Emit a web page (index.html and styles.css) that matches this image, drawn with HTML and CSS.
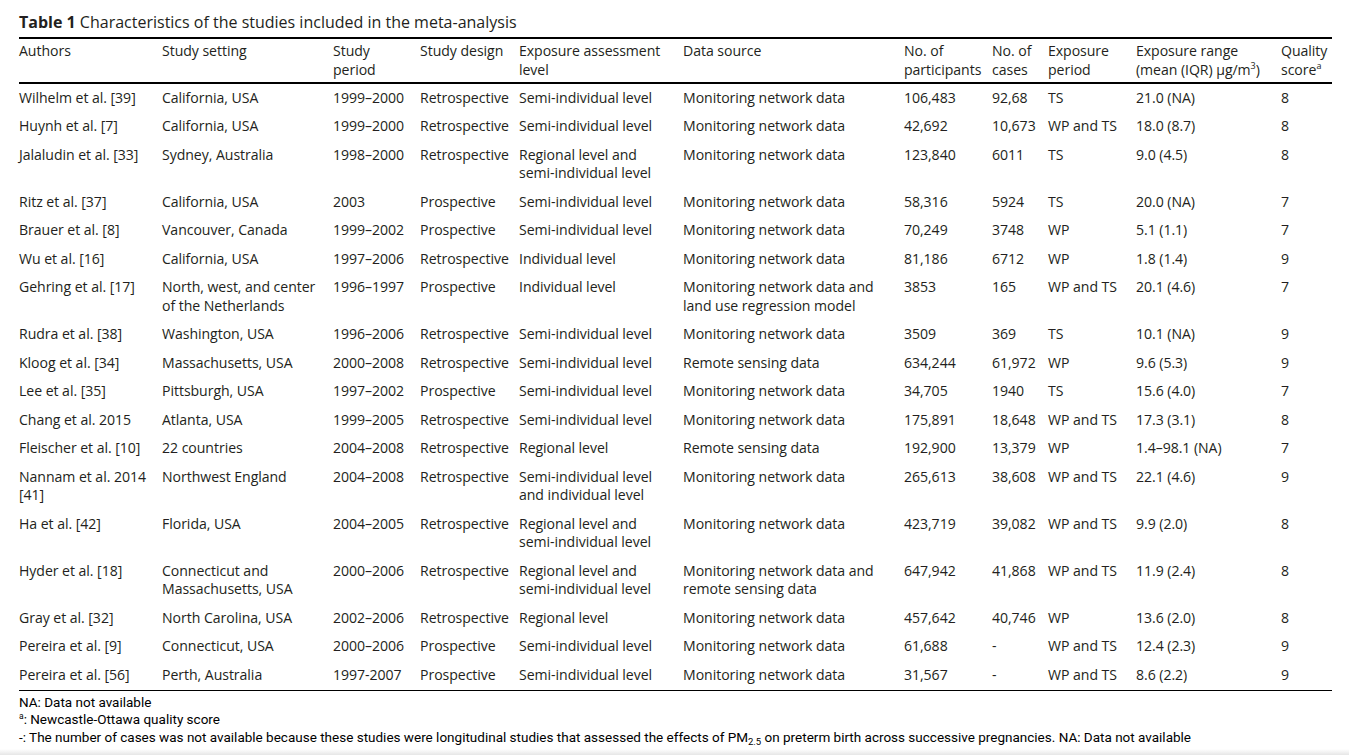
FILE: index.html
```html
<!DOCTYPE html>
<html lang="en">
<head>
<meta charset="utf-8">
<title>Table 1</title>
<link rel="stylesheet" href="styles.css">
</head>
<body>
<div class="page">
  <h1 class="caption"><b>Table 1</b> Characteristics of the studies included in the meta-analysis</h1>
  <table class="tbl">
    <colgroup>
      <col class="c1"><col class="c2"><col class="c3"><col class="c4"><col class="c5"><col class="c6"><col class="c7"><col class="c8"><col class="c9"><col class="c10"><col class="c11">
    </colgroup>
    <thead>
      <tr>
        <th>Authors</th><th>Study setting</th><th>Study<br>period</th><th>Study design</th><th>Exposure assessment<br>level</th><th>Data source</th><th>No. of<br>participants</th><th>No. of<br>cases</th><th>Exposure<br>period</th><th>Exposure range<br>(mean (IQR) µg/m<sup>3</sup>)</th><th>Quality<br>score<sup>a</sup></th>
      </tr>
    </thead>
    <tbody>
      <tr><td>Wilhelm et al. [39]</td><td>California, USA</td><td>1999–2000</td><td>Retrospective</td><td>Semi-individual level</td><td>Monitoring network data</td><td>106,483</td><td>92,68</td><td>TS</td><td>21.0 (NA)</td><td>8</td></tr>
      <tr><td>Huynh et al. [7]</td><td>California, USA</td><td>1999–2000</td><td>Retrospective</td><td>Semi-individual level</td><td>Monitoring network data</td><td>42,692</td><td>10,673</td><td>WP and TS</td><td>18.0 (8.7)</td><td>8</td></tr>
      <tr><td>Jalaludin et al. [33]</td><td>Sydney, Australia</td><td>1998–2000</td><td>Retrospective</td><td>Regional level and<br>semi-individual level</td><td>Monitoring network data</td><td>123,840</td><td>6011</td><td>TS</td><td>9.0 (4.5)</td><td>8</td></tr>
      <tr><td>Ritz et al. [37]</td><td>California, USA</td><td>2003</td><td>Prospective</td><td>Semi-individual level</td><td>Monitoring network data</td><td>58,316</td><td>5924</td><td>TS</td><td>20.0 (NA)</td><td>7</td></tr>
      <tr><td>Brauer et al. [8]</td><td>Vancouver, Canada</td><td>1999–2002</td><td>Prospective</td><td>Semi-individual level</td><td>Monitoring network data</td><td>70,249</td><td>3748</td><td>WP</td><td>5.1 (1.1)</td><td>7</td></tr>
      <tr><td>Wu et al. [16]</td><td>California, USA</td><td>1997–2006</td><td>Retrospective</td><td>Individual level</td><td>Monitoring network data</td><td>81,186</td><td>6712</td><td>WP</td><td>1.8 (1.4)</td><td>9</td></tr>
      <tr><td>Gehring et al. [17]</td><td>North, west, and center<br>of the Netherlands</td><td>1996–1997</td><td>Prospective</td><td>Individual level</td><td>Monitoring network data and<br>land use regression model</td><td>3853</td><td>165</td><td>WP and TS</td><td>20.1 (4.6)</td><td>7</td></tr>
      <tr><td>Rudra et al. [38]</td><td>Washington, USA</td><td>1996–2006</td><td>Retrospective</td><td>Semi-individual level</td><td>Monitoring network data</td><td>3509</td><td>369</td><td>TS</td><td>10.1 (NA)</td><td>9</td></tr>
      <tr><td>Kloog et al. [34]</td><td>Massachusetts, USA</td><td>2000–2008</td><td>Retrospective</td><td>Semi-individual level</td><td>Remote sensing data</td><td>634,244</td><td>61,972</td><td>WP</td><td>9.6 (5.3)</td><td>9</td></tr>
      <tr><td>Lee et al. [35]</td><td>Pittsburgh, USA</td><td>1997–2002</td><td>Prospective</td><td>Semi-individual level</td><td>Monitoring network data</td><td>34,705</td><td>1940</td><td>TS</td><td>15.6 (4.0)</td><td>7</td></tr>
      <tr><td>Chang et al. 2015</td><td>Atlanta, USA</td><td>1999–2005</td><td>Retrospective</td><td>Semi-individual level</td><td>Monitoring network data</td><td>175,891</td><td>18,648</td><td>WP and TS</td><td>17.3 (3.1)</td><td>8</td></tr>
      <tr><td>Fleischer et al. [10]</td><td>22 countries</td><td>2004–2008</td><td>Retrospective</td><td>Regional level</td><td>Remote sensing data</td><td>192,900</td><td>13,379</td><td>WP</td><td>1.4–98.1 (NA)</td><td>7</td></tr>
      <tr><td>Nannam et al. 2014<br>[41]</td><td>Northwest England</td><td>2004–2008</td><td>Retrospective</td><td>Semi-individual level<br>and individual level</td><td>Monitoring network data</td><td>265,613</td><td>38,608</td><td>WP and TS</td><td>22.1 (4.6)</td><td>9</td></tr>
      <tr><td>Ha et al. [42]</td><td>Florida, USA</td><td>2004–2005</td><td>Retrospective</td><td>Regional level and<br>semi-individual level</td><td>Monitoring network data</td><td>423,719</td><td>39,082</td><td>WP and TS</td><td>9.9 (2.0)</td><td>8</td></tr>
      <tr><td>Hyder et al. [18]</td><td>Connecticut and<br>Massachusetts, USA</td><td>2000–2006</td><td>Retrospective</td><td>Regional level and<br>semi-individual level</td><td>Monitoring network data and<br>remote sensing data</td><td>647,942</td><td>41,868</td><td>WP and TS</td><td>11.9 (2.4)</td><td>8</td></tr>
      <tr><td>Gray et al. [32]</td><td>North Carolina, USA</td><td>2002–2006</td><td>Retrospective</td><td>Regional level</td><td>Monitoring network data</td><td>457,642</td><td>40,746</td><td>WP</td><td>13.6 (2.0)</td><td>8</td></tr>
      <tr><td>Pereira et al. [9]</td><td>Connecticut, USA</td><td>2000–2006</td><td>Prospective</td><td>Semi-individual level</td><td>Monitoring network data</td><td>61,688</td><td>-</td><td>WP and TS</td><td>12.4 (2.3)</td><td>9</td></tr>
      <tr><td>Pereira et al. [56]</td><td>Perth, Australia</td><td>1997-2007</td><td>Prospective</td><td>Semi-individual level</td><td>Monitoring network data</td><td>31,567</td><td>-</td><td>WP and TS</td><td>8.6 (2.2)</td><td>9</td></tr>
    </tbody>
  </table>
  <div class="notes">
    <p>NA: Data not available</p>
    <p><sup>a</sup>: Newcastle-Ottawa quality score</p>
    <p>-: The number of cases was not available because these studies were longitudinal studies that assessed the effects of PM<sub>2.5</sub> on preterm birth across successive pregnancies. NA: Data not available</p>
  </div>
</div>
<div class="edge"></div>
</body>
</html>
```
FILE: styles.css
```css
html, body {
  margin: 0;
  padding: 0;
  background: #ffffff;
}
body {
  width: 1349px;
  height: 755px;
  overflow: hidden;
  display: flex;
  flex-direction: column;
  font-family: "Open Sans", "DejaVu Sans", sans-serif;
  color: #231f20;
}
.page {
  flex: 1;
  padding: 12px 17px 0 19px;
}
.caption {
  margin: 0;
  font-size: 16px;
  line-height: 20px;
  font-weight: 400;
  color: #231f20;
}
.caption b {
  font-weight: 700;
}
.tbl {
  margin-top: 5px;
  width: 1313px;
  table-layout: fixed;
  border-collapse: collapse;
  font-size: 14.1px;
  line-height: 18.5px;
  letter-spacing: -0.05px;
}
.c1 { width: 143px; }
.c2 { width: 171px; }
.c3 { width: 87px; }
.c4 { width: 99px; }
.c5 { width: 164px; }
.c6 { width: 221px; }
.c7 { width: 88px; }
.c8 { width: 56px; }
.c9 { width: 88px; }
.c10 { width: 145px; }
.c11 { width: 51px; }
.tbl thead tr {
  border-top: 2px solid #000;
  border-bottom: 2px solid #000;
}
.tbl th {
  text-align: left;
  font-weight: 400;
  vertical-align: top;
  padding: 2px 0 3px 0;
  line-height: 19px;
  white-space: nowrap;
}
.tbl td {
  vertical-align: top;
  padding: 4.5px 0 5.5px 0;
  white-space: nowrap;
}
.tbl tbody tr:last-child {
  border-bottom: 1.5px solid #000;
}
.tbl sup {
  font-size: 9px;
  line-height: 0;
  vertical-align: 6px;
}
.notes {
  margin-top: 3px;
  font-family: "Roboto", "DejaVu Sans Condensed", sans-serif;
  font-size: 13.5px;
  line-height: 17.5px;
  color: #000;
}
.notes p {
  margin: 0;
}
.notes sup {
  font-size: 8.5px;
  line-height: 0;
  vertical-align: 5px;
}
.notes sub {
  font-size: 9.5px;
  line-height: 0;
  vertical-align: -3px;
}
.edge {
  height: 6px;
  background: linear-gradient(#ffffff, #e6e6e6);
  flex: none;
}
```
